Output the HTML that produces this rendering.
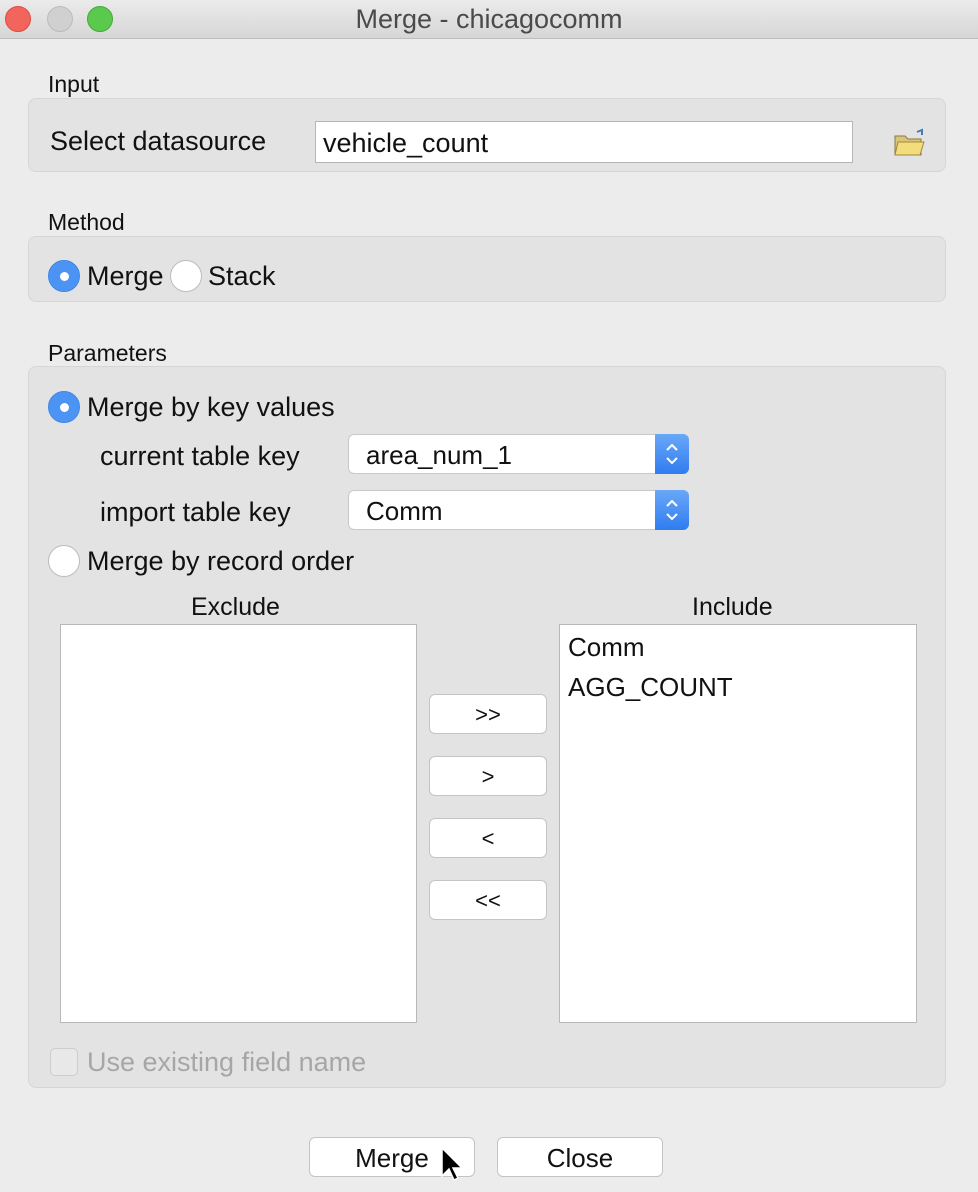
<!DOCTYPE html>
<html><head><style>
*{box-sizing:border-box;margin:0;padding:0}
body{width:978px;height:1192px;background:#ececec;font-family:"Liberation Sans",sans-serif;color:#111;position:relative;overflow:hidden}
.a{position:absolute}
.t{position:absolute;white-space:nowrap}
.grp{position:absolute;background:#e3e3e3;border:1px solid #d6d6d6;border-radius:8px}
.radio{position:absolute;width:32px;height:32px;border-radius:50%;background:#fff;border:1px solid #bcbcbc}
.radio.on{background:#4c94f4;border-color:#3f86e8}
.radio.on::after{content:"";position:absolute;left:11px;top:11px;width:9px;height:9px;border-radius:50%;background:#fff}
.sel{position:absolute;height:40px;background:#fff;border:1px solid #c9c9c9;border-radius:6px;font-size:26px;padding:5px 0 0 17px}
.sel .arr{position:absolute;right:-1px;top:-1px;width:34px;height:40px;background:linear-gradient(#6aa8f7,#2f7cf0);border-radius:0 6px 6px 0}
.btn{position:absolute;background:#fff;border:1px solid #c4c4c4;border-radius:6px;font-size:22px;text-align:center}
.list{position:absolute;background:#fff;border:1px solid #b8b8b8}
.l{font-size:27px}
.s{font-size:23px}
</style></head><body>
<div class="a" style="left:0;top:0;width:978px;height:39px;background:linear-gradient(#ebebeb,#d6d6d6);border-bottom:1px solid #bdbdbd"></div>
<div class="a" style="left:5px;top:6px;width:26px;height:26px;border-radius:50%;background:#f2655c;border:1px solid #de4c43"></div>
<div class="a" style="left:47px;top:6px;width:26px;height:26px;border-radius:50%;background:#d0d0d0;border:1px solid #bcbcbc"></div>
<div class="a" style="left:87px;top:6px;width:26px;height:26px;border-radius:50%;background:#5bc84e;border:1px solid #44ab38"></div>
<div class="t" style="left:0;width:978px;text-align:center;top:4px;font-size:27px;color:#4a4a4a">Merge - chicagocomm</div>

<div class="t s" style="left:48px;top:71px">Input</div>
<div class="grp" style="left:28px;top:98px;width:918px;height:74px"></div>
<div class="t l" style="left:50px;top:126px">Select datasource</div>
<div class="a" style="left:315px;top:121px;width:538px;height:42px;background:#fff;border:1px solid #b5b5b5"></div>
<div class="t l" style="left:323px;top:128px">vehicle_count</div>
<svg class="a" style="left:893px;top:128px" width="34" height="30"><path d="M2 8h10l3 3h13v16H2z" fill="#d9c47a" stroke="#8a7a40"/><path d="M5 14h26l-4 13H2z" fill="#f3dc7c" stroke="#a08a3a"/><path d="M24 4l5-2v5" fill="none" stroke="#4a78b8" stroke-width="2"/></svg>

<div class="t s" style="left:48px;top:209px">Method</div>
<div class="grp" style="left:28px;top:236px;width:918px;height:66px"></div>
<div class="radio on" style="left:48px;top:260px"></div>
<div class="t l" style="left:87px;top:261px">Merge</div>
<div class="radio" style="left:170px;top:260px"></div>
<div class="t l" style="left:208px;top:261px">Stack</div>

<div class="t s" style="left:48px;top:340px">Parameters</div>
<div class="grp" style="left:28px;top:366px;width:918px;height:722px"></div>
<div class="radio on" style="left:48px;top:391px"></div>
<div class="t l" style="left:87px;top:392px">Merge by key values</div>
<div class="t l" style="left:100px;top:441px">current table key</div>
<div class="sel" style="left:348px;top:434px;width:341px">area_num_1<div class="arr"><svg width="34" height="40"><path d="M12 16l5-5 5 5M12 24l5 5 5-5" fill="none" stroke="#fff" stroke-width="2"/></svg></div></div>
<div class="t l" style="left:100px;top:497px">import table key</div>
<div class="sel" style="left:348px;top:490px;width:341px">Comm<div class="arr"><svg width="34" height="40"><path d="M12 16l5-5 5 5M12 24l5 5 5-5" fill="none" stroke="#fff" stroke-width="2"/></svg></div></div>
<div class="radio" style="left:48px;top:545px"></div>
<div class="t l" style="left:87px;top:546px">Merge by record order</div>

<div class="t" style="left:191px;top:593px;font-size:25px">Exclude</div>
<div class="t" style="left:692px;top:593px;font-size:25px">Include</div>
<div class="list" style="left:60px;top:624px;width:357px;height:399px"></div>
<div class="list" style="left:559px;top:624px;width:358px;height:399px"></div>
<div class="t" style="left:568px;top:632px;font-size:26px">Comm</div>
<div class="t" style="left:568px;top:672px;font-size:26px">AGG_COUNT</div>

<div class="btn" style="left:429px;top:694px;width:118px;height:40px;padding-top:7px">&gt;&gt;</div>
<div class="btn" style="left:429px;top:756px;width:118px;height:40px;padding-top:7px">&gt;</div>
<div class="btn" style="left:429px;top:818px;width:118px;height:40px;padding-top:7px">&lt;</div>
<div class="btn" style="left:429px;top:880px;width:118px;height:40px;padding-top:7px">&lt;&lt;</div>

<div class="a" style="left:50px;top:1048px;width:28px;height:28px;border:1px solid #cdcdcd;border-radius:5px;background:#e8e8e8"></div>
<div class="t l" style="left:87px;top:1047px;color:#a6a6a6">Use existing field name</div>

<div class="btn" style="left:309px;top:1137px;width:166px;height:40px;padding-top:5px;font-size:26px">Merge</div>
<div class="btn" style="left:497px;top:1137px;width:166px;height:40px;padding-top:5px;font-size:26px">Close</div>
<svg class="a" style="left:440px;top:1146px" width="24" height="40"><path d="M2 2v28l7-7 5 11 4-2-5-10h9z" fill="#000" stroke="#fff" stroke-width="1.5"/></svg>
</body></html>
